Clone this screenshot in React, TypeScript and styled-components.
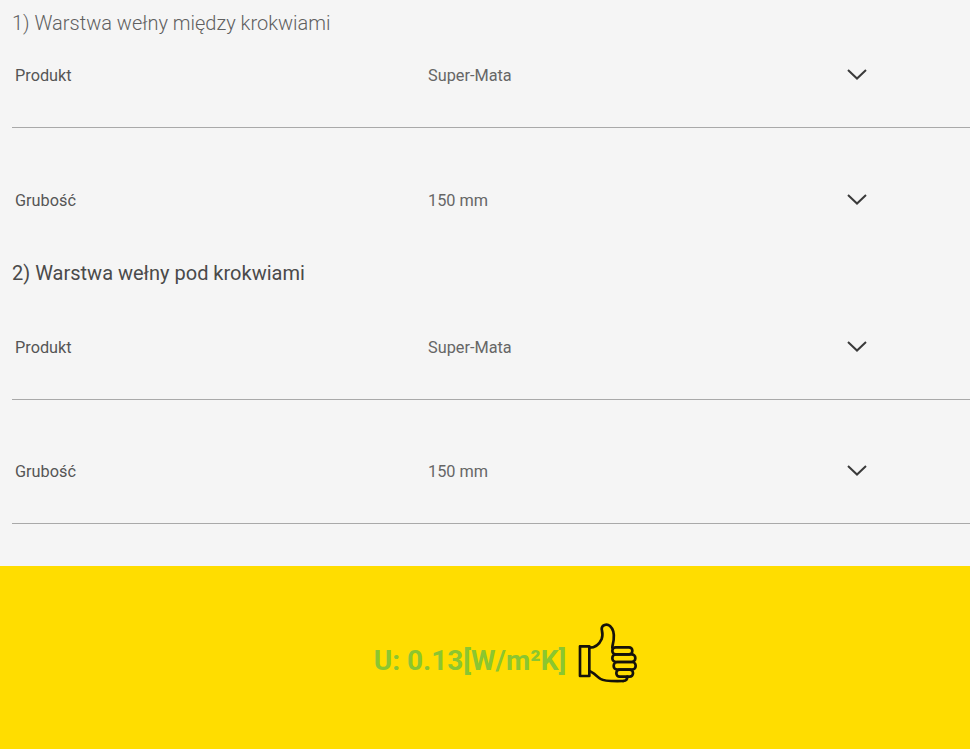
import React from "react";
import styled, { createGlobalStyle } from "styled-components";

const GlobalStyle = createGlobalStyle`
  html, body {
    margin: 0;
    padding: 0;
    background: #f5f5f5;
  }
  body {
    font-family: Roboto, "Liberation Sans", sans-serif;
    overflow: hidden;
  }
`;

const Page = styled.div`
  width: 970px;
  height: 749px;
  display: flex;
  flex-direction: column;
  background: #f5f5f5;
`;

const Form = styled.div`
  flex: 1;
  padding-left: 12px;
`;

const Heading = styled.h2<{ $muted?: boolean; $top?: number }>`
  margin: ${(p) => p.$top ?? 0}px 0 0;
  height: 46px;
  line-height: 46px;
  font-size: 20px;
  font-weight: ${(p) => (p.$muted ? 300 : 400)};
  color: ${(p) => (p.$muted ? "#5f5f5f" : "#4a4a4a")};
`;

const Row = styled.div<{ $top: number; $plain?: boolean }>`
  display: grid;
  grid-template-columns: 413px 419px 20px;
  align-items: center;
  height: 24px;
  margin-top: ${(p) => p.$top}px;
  padding: 0 0 40px 3px;
  border-bottom: 1px solid ${(p) => (p.$plain ? "transparent" : "#a9a9a9")};
`;

const Label = styled.span`
  font-size: 16.3px;
  color: #555;
`;

const Value = styled.span`
  font-size: 16.3px;
  color: #666;
`;

const Chevron = styled.svg`
  display: block;
  width: 20px;
  height: 11px;
  margin-bottom: 2px;
  fill: none;
  stroke: #3a3a3a;
  stroke-width: 2;
`;

const ResultBar = styled.div`
  height: 183px;
  background: #ffdd00;
  display: flex;
  align-items: center;
  justify-content: center;
  gap: 4px;
  padding-left: 54px;
`;

const Result = styled.span`
  font-size: 28px;
  font-weight: 700;
  color: #8bc630;
  margin-top: 5px;
`;

const Thumb = styled.svg`
  display: block;
  width: 80px;
  height: 75px;
  margin-top: -11px;
  fill: none;
  stroke: #15120a;
  stroke-width: 8;
  stroke-linejoin: round;
  stroke-linecap: round;
`;

const ChevronIcon = () => (
  <Chevron viewBox="0 0 20 11">
    <path d="M1 1 L10 9.5 L19 1" />
  </Chevron>
);

const ThumbIcon = () => (
  <Thumb viewBox="0 0 240 225">
    <path d="M30 94 H58 V183 H30 Z" />
    <path d="M58 98 C78 98 88 88 95 72 C100 60 96 48 95 42 C95 30 110 25 120 33 C130 42 133 58 131 74 C130 84 127 90 127 98" />
    <path d="M58 168 C70 172 80 184 92 192 C102 199 125 199 160 198" />
    <rect x="127" y="97" width="60" height="21" rx="10" />
    <rect x="127" y="118" width="69" height="23" rx="11" />
    <rect x="131" y="141" width="66" height="23" rx="11" />
    <rect x="139" y="164" width="50" height="21" rx="10" />
    <path d="M160 198 C168 197 172 192 172 185" />
  </Thumb>
);

const SelectRow = ({
  label,
  value,
  top,
  plain,
}: {
  label: string;
  value: string;
  top: number;
  plain?: boolean;
}) => (
  <Row $top={top} $plain={plain}>
    <Label>{label}</Label>
    <Value>{value}</Value>
    <ChevronIcon />
  </Row>
);

export default function App() {
  return (
    <Page>
      <GlobalStyle />
      <Form>
        <Heading $muted>1) Warstwa wełny między krokwiami</Heading>
        <SelectRow label="Produkt" value="Super-Mata" top={17} />
        <SelectRow label="Grubość" value="150 mm" top={60} plain />
        <Heading $top={-3}>2) Warstwa wełny pod krokwiami</Heading>
        <SelectRow label="Produkt" value="Super-Mata" top={39} />
        <SelectRow label="Grubość" value="150 mm" top={59} />
      </Form>
      <ResultBar>
        <Result>U: 0.13[W/m²K]</Result>
        <ThumbIcon />
      </ResultBar>
    </Page>
  );
}
